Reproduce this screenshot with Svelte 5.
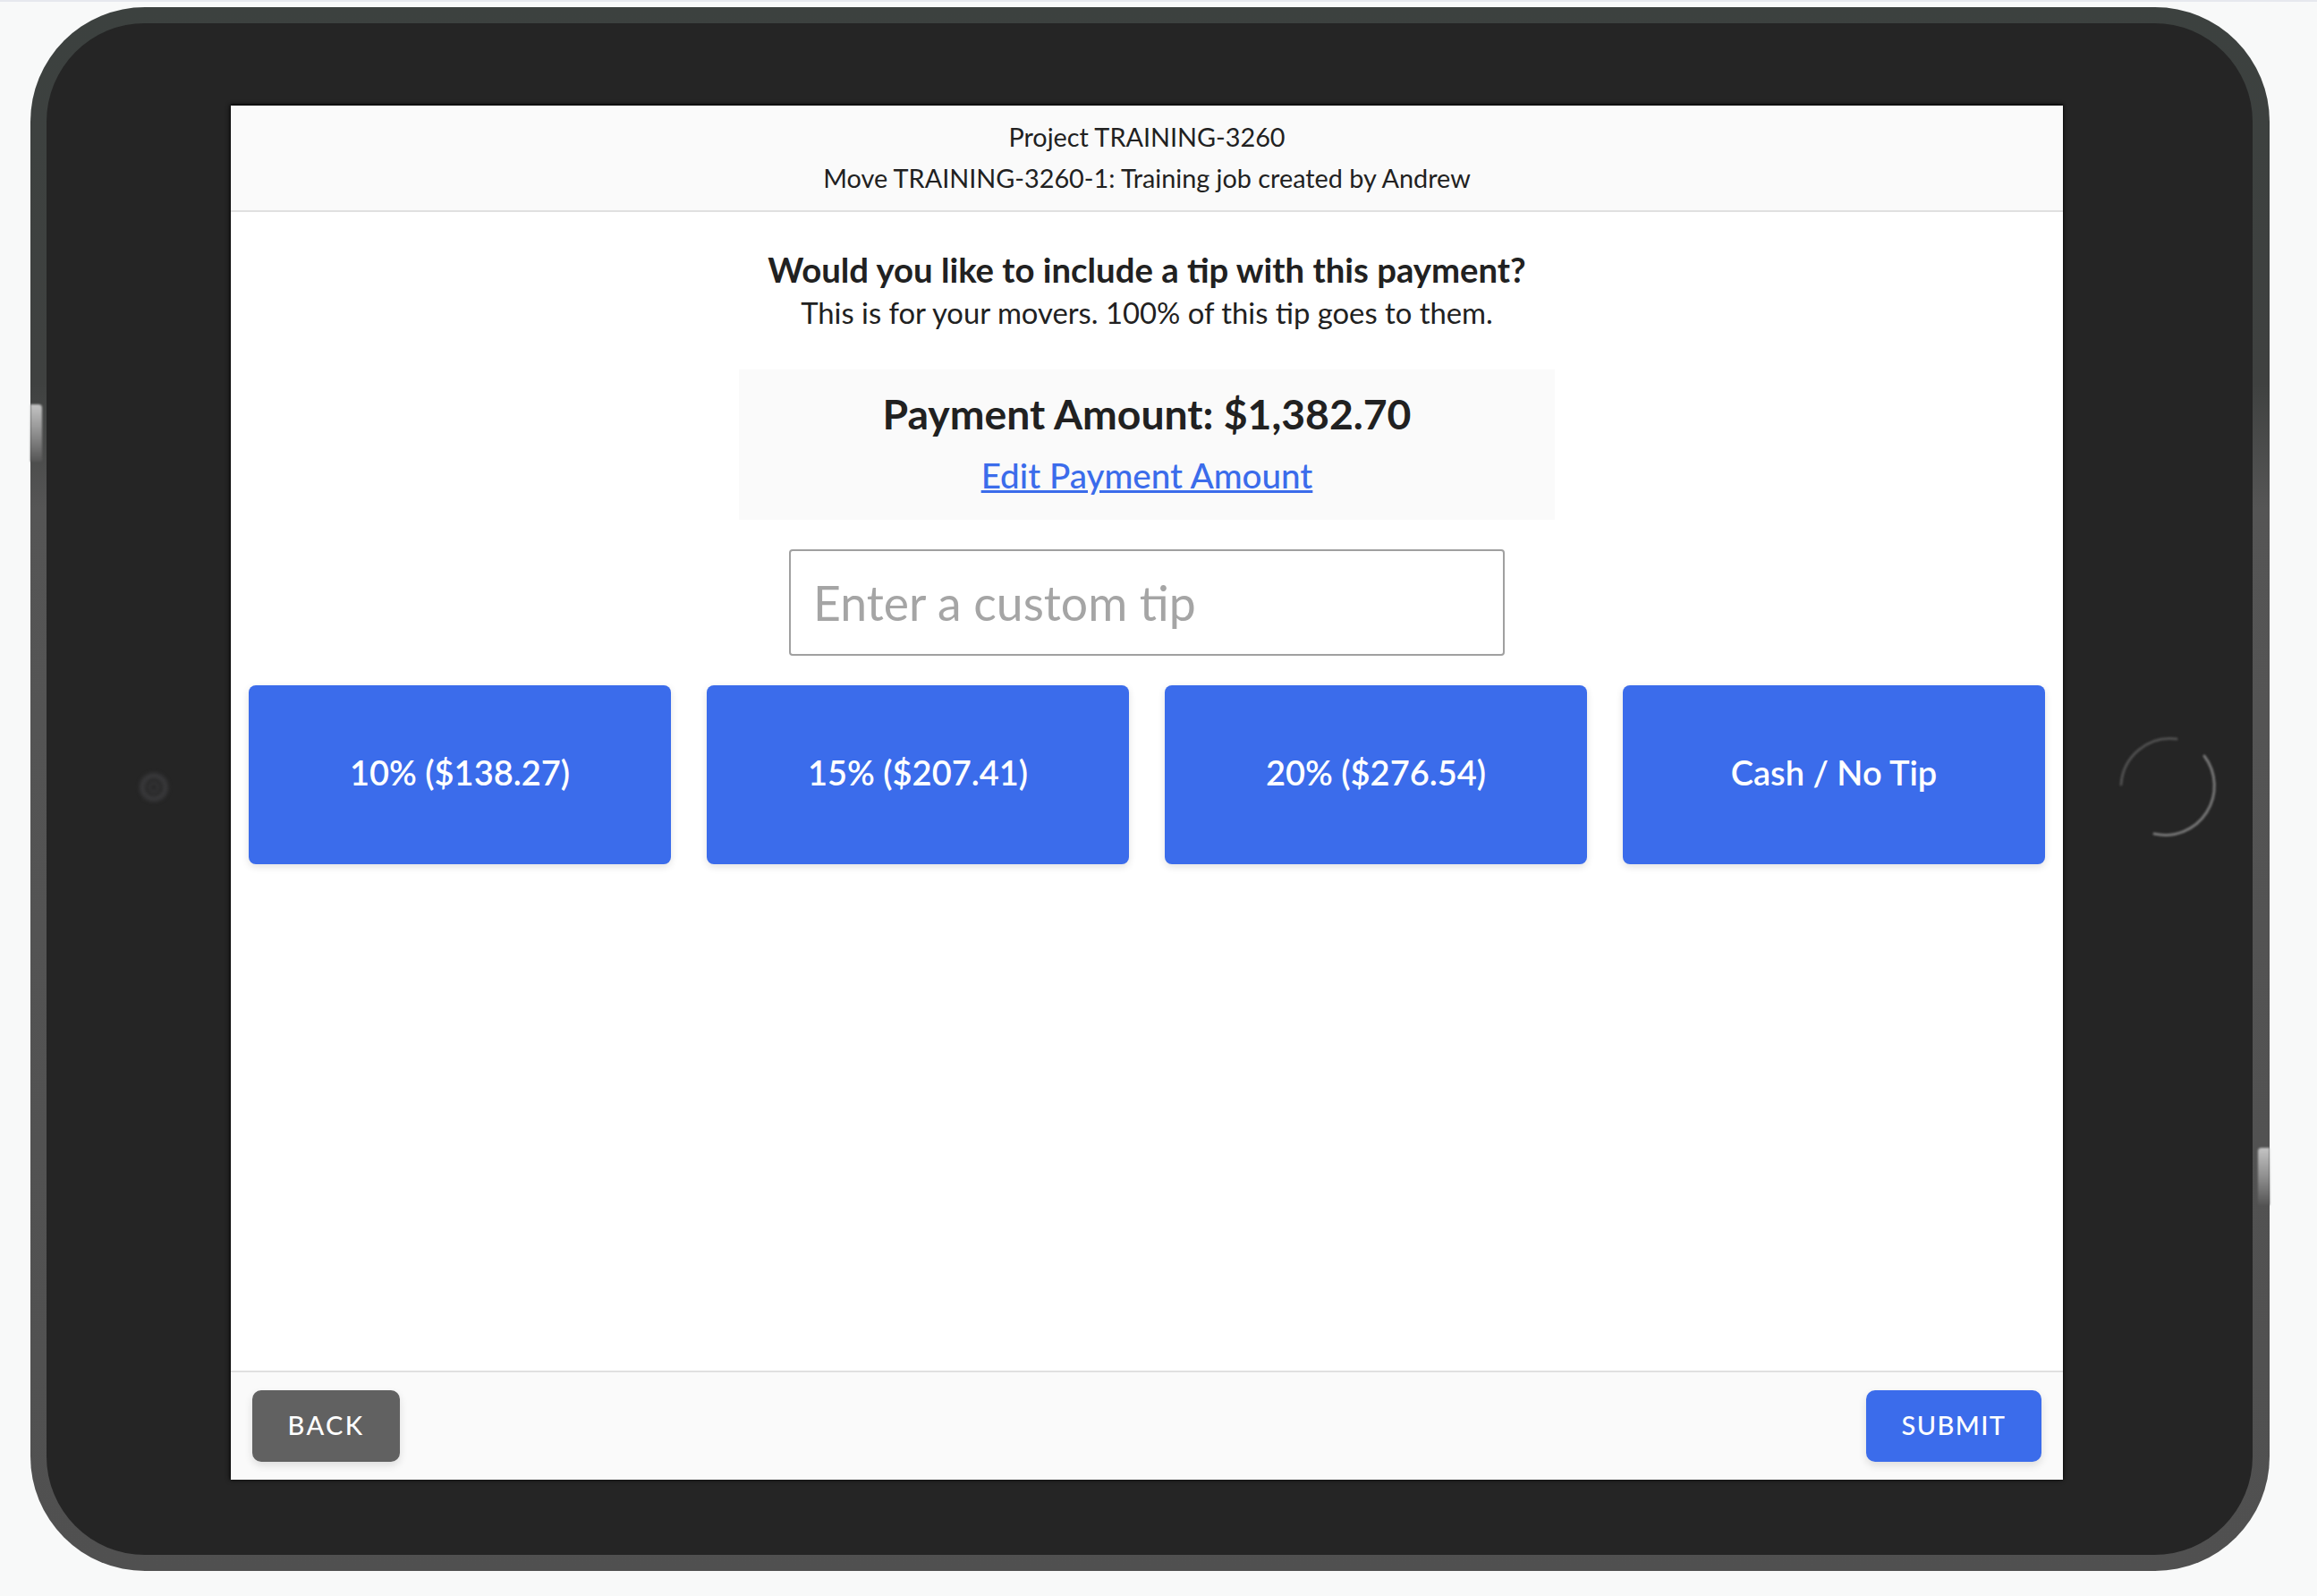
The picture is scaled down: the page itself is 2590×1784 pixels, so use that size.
<script>
  const tips = ['10% ($138.27)', '15% ($207.41)', '20% ($276.54)', 'Cash / No Tip'];
</script>

<div class="page">
  <div class="device">
    <span class="glint left"></span>
    <span class="glint right"></span>
    <div class="bezel">
      <svg class="camera" width="40" height="40" viewBox="0 0 40 40" aria-hidden="true">
        <circle cx="20" cy="20" r="13" fill="none" stroke="#39393b" stroke-width="6" />
        <circle cx="20" cy="20" r="5" fill="none" stroke="#39393b" stroke-width="3" />
      </svg>
      <svg class="home" width="130" height="130" viewBox="0 0 130 130" aria-hidden="true">
        <path d="M104 30 A55 55 0 0 1 48 117" fill="none" stroke="#777" stroke-width="3" stroke-linecap="round" />
        <path d="M73 11 A55 55 0 0 0 11 62" fill="none" stroke="#505050" stroke-width="3" stroke-linecap="round" />
      </svg>
      <div class="screen">
        <header class="top">
          <div>Project TRAINING-3260</div>
          <div>Move TRAINING-3260-1: Training job created by Andrew</div>
        </header>
        <main class="content">
          <h1>Would you like to include a tip with this payment?</h1>
          <p class="sub">This is for your movers. 100% of this tip goes to them.</p>
          <div class="amount">
            <div class="amount-title">Payment Amount: $1,382.70</div>
            <a class="edit" href="#edit">Edit Payment Amount</a>
          </div>
          <input class="tip-input" type="text" placeholder="Enter a custom tip" />
          <div class="tips">
            {#each tips as tip}
              <button class="tip">{tip}</button>
            {/each}
          </div>
        </main>
        <footer class="bottom">
          <button class="action back">BACK</button>
          <button class="action submit">SUBMIT</button>
        </footer>
      </div>
    </div>
  </div>
</div>

<style>
  :global(body) {
    background: #f8f9f9;
  }

  .page {
    box-sizing: border-box;
    width: 2590px;
    height: 1784px;
    padding: 8px 53px 0 34px;
    border-top: 2px solid #e6e8ee;
    font-family: Lato, "Liberation Sans", sans-serif;
    color: #212121;
    overflow: hidden;
  }

  .page > .device {
    margin-top: -2px;
  }

  .device {
    position: relative;
    box-sizing: border-box;
    height: 1748px;
    padding: 18px 19px 18px 18px;
    border-radius: 128px;
    background: linear-gradient(to bottom, #3c413f 0, #3f4140 420px, #555 560px, #505050 100%);
  }

  .bezel {
    position: relative;
    box-sizing: border-box;
    height: 100%;
    padding: 92px 212px 84px 206px;
    border-radius: 110px;
    background: #252525;
  }

  /* light catches on the metal edge by the side buttons */
  .glint {
    position: absolute;
    width: 13px;
    height: 64px;
    border-radius: 4px 0 0 0;
    background: linear-gradient(to bottom, #c4c4c4, #8a8a8a 55%, #555);
    filter: blur(1px);
  }

  .glint.left {
    left: 0;
    top: 444px;
    border-radius: 0 4px 0 0;
  }

  .glint.right {
    right: 0;
    top: 1275px;
  }

  .camera {
    position: absolute;
    left: 100px;
    top: 834px;
    filter: blur(2px);
  }

  .home {
    position: absolute;
    left: 2308px;
    top: 789px;
    filter: blur(1.2px);
  }

  .screen {
    display: flex;
    flex-direction: column;
    box-sizing: border-box;
    width: 2048px;
    height: 1536px;
    background: #fff;
    box-shadow: 0 -1px 3px #000, -1px 0 5px #111;
  }

  .top {
    box-sizing: border-box;
    height: 119px;
    padding-top: 12px;
    background: #fafafa;
    border-bottom: 2px solid #e0e0e0;
    font-size: 28.8px;
    line-height: 46px;
    text-align: center;
  }

  .content {
    flex: 1;
    display: flex;
    flex-direction: column;
    align-items: center;
    padding: 40px 20px 0;
  }

  h1 {
    margin: 0 0 1px;
    font-size: 38.3px;
    font-weight: 700;
    line-height: 48px;
  }

  .sub {
    margin: 0;
    font-size: 32.8px;
    line-height: 48px;
  }

  .amount {
    box-sizing: border-box;
    width: 912px;
    height: 168px;
    margin-top: 39px;
    padding-top: 19px;
    background: #fafafa;
    text-align: center;
  }

  .amount-title {
    font-size: 46.3px;
    font-weight: 700;
    line-height: 60px;
  }

  .edit {
    display: inline-block;
    margin-top: 15px;
    color: #3b6ceb;
    font-size: 38.6px;
    font-weight: 500;
    line-height: 48px;
  }

  .tip-input {
    box-sizing: border-box;
    width: 800px;
    height: 119px;
    margin-top: 33px;
    padding: 0 25px 2px;
    border: 2px solid #a0a0a0;
    border-radius: 4px;
    background: #fff;
    font-family: inherit;
    font-size: 53.5px;
    outline: none;
  }

  .tip-input::placeholder {
    color: #a5a5a5;
    opacity: 1;
  }

  .tips {
    align-self: stretch;
    display: grid;
    grid-template-columns: repeat(4, 1fr);
    gap: 40px;
    margin-top: 33px;
  }

  .tip {
    height: 200px;
    padding: 0 0 6px;
    border: none;
    border-radius: 8px;
    background: #3b6ceb;
    color: #fff;
    font-family: inherit;
    font-size: 38px;
    font-weight: 600;
    box-shadow: 0 3px 8px rgb(0 0 0 / 0.12);
  }

  .bottom {
    display: flex;
    justify-content: space-between;
    box-sizing: border-box;
    height: 122px;
    padding: 20px 24px 0;
    background: #fafafa;
    border-top: 2px solid #e0e0e0;
  }

  .action {
    height: 80px;
    padding: 0 0 3px;
    border: none;
    border-radius: 10px;
    color: #fff;
    font-family: inherit;
    font-size: 29px;
    font-weight: 500;
    letter-spacing: 2.4px;
    box-shadow: 0 4px 10px rgb(0 0 0 / 0.12);
  }

  .back {
    width: 165px;
    background: #616161;
  }

  .submit {
    width: 196px;
    background: #3b6ceb;
    letter-spacing: 1.4px;
  }
</style>
